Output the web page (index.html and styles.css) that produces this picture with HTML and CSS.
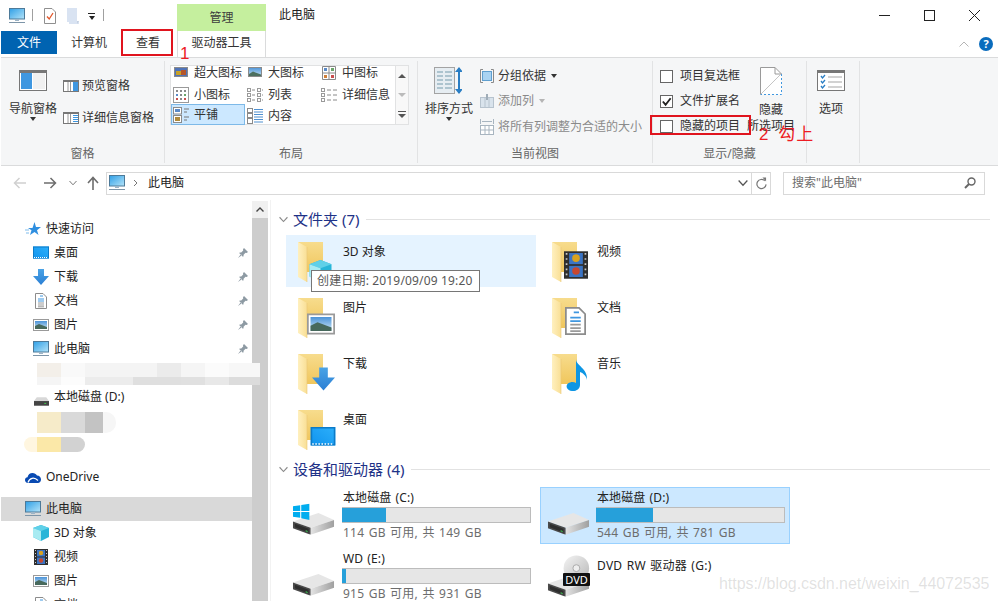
FILE: index.html
```html
<!DOCTYPE html>
<html lang="zh-CN">
<head>
<meta charset="utf-8">
<title>此电脑</title>
<link rel="stylesheet" href="styles.css">
</head>
<body>
<svg class="defs" width="0" height="0" aria-hidden="true">
  <defs>
    <linearGradient id="gScreen" x1="0" y1="0" x2="1" y2="1"><stop offset="0" stop-color="#2f9fe6"/><stop offset="1" stop-color="#b5e4f9"/></linearGradient>
    <linearGradient id="gFolderBack" x1="0" y1="0" x2="0" y2="1"><stop offset="0" stop-color="#f7dc8d"/><stop offset="1" stop-color="#f0c65c"/></linearGradient>
    <linearGradient id="gFolderFront" x1="0" y1="0" x2="1" y2="0"><stop offset="0" stop-color="#fff0bf"/><stop offset="1" stop-color="#f9df95"/></linearGradient>
    <linearGradient id="gArrow" x1="0" y1="0" x2="0" y2="1"><stop offset="0" stop-color="#4aa3e6"/><stop offset="1" stop-color="#2b7fd4"/></linearGradient>
    <linearGradient id="gDesk" x1="0" y1="1" x2="1" y2="0"><stop offset="0" stop-color="#0f93ee"/><stop offset="1" stop-color="#2db0fb"/></linearGradient>
    <linearGradient id="gSky" x1="0" y1="0" x2="0" y2="1"><stop offset="0" stop-color="#4b93d8"/><stop offset="1" stop-color="#cfe7f5"/></linearGradient>
    <linearGradient id="gHdd" x1="0" y1="0" x2="1" y2="0"><stop offset="0" stop-color="#e4e4e4"/><stop offset="1" stop-color="#9f9f9f"/></linearGradient>
    <linearGradient id="gDisc" x1="0" y1="0" x2="1" y2="1"><stop offset="0" stop-color="#f4f4f4"/><stop offset="1" stop-color="#b8b8b8"/></linearGradient>

    <symbol id="i-monitor" viewBox="0 0 16 16"><rect x=".5" y=".5" width="15" height="10.5" fill="url(#gScreen)" stroke="#4d7a99"/><rect x="6" y="11" width="4" height="2" fill="#9db4c6"/><rect x="0" y="14" width="16" height="1" fill="#7d95a8"/></symbol>
    <symbol id="i-pagecheck" viewBox="0 0 12 16"><path d="M.5.5H8L11.500 4V15.500H.5Z" fill="#fff" stroke="#8f8f8f"/><path d="M3 8.500 5.200 11 9 5" fill="none" stroke="#e2562a" stroke-width="1.300"/></symbol>
    <symbol id="i-pageblank" viewBox="0 0 12 16"><path d="M0 0H10V13L12 13V16H2V14H0Z" fill="#d9e3f2"/><path d="M10 13H12L10 16Z" fill="#c4cfdf"/></symbol>
    <symbol id="i-navpane" viewBox="0 0 28 21"><rect x=".5" y=".5" width="27" height="20" fill="#fff" stroke="#777"/><rect x="0" y="0" width="28" height="3" fill="#777"/><rect x="2" y="3" width="11" height="16" fill="#3f97e0"/><rect x="14" y="3" width="12" height="16" fill="#f1f1f1"/></symbol>
    <symbol id="i-preview" viewBox="0 0 16 12"><rect x=".5" y=".5" width="15" height="11" fill="#fff" stroke="#777"/><rect x="0" y="0" width="16" height="2" fill="#777"/><path d="M5 2V11M7.500 2V11" stroke="#9a9a9a"/><rect x="10" y="2" width="5" height="9" fill="#3f97e0"/></symbol>
    <symbol id="i-detailspane" viewBox="0 0 16 12"><rect x=".5" y=".5" width="15" height="11" fill="#fff" stroke="#777"/><rect x="0" y="0" width="16" height="2" fill="#777"/><path d="M5 2V11M7.500 2V11" stroke="#9a9a9a"/><path d="M10 3.500H15M10 5.500H15M10 7.500H15M10 9.500H15" stroke="#3f97e0"/></symbol>

    <symbol id="g-xl" viewBox="0 0 16 16"><rect x="1.500" y="2.500" width="13" height="9" fill="#4f73b8" stroke="#8a8a8a"/><rect x="3" y="6" width="5" height="4" fill="#c9a227"/><rect x="8" y="5" width="5" height="5" fill="#b5562a"/></symbol>
    <symbol id="g-lg" viewBox="0 0 16 16"><rect x="1.500" y="2.500" width="13" height="9" fill="url(#gSky)" stroke="#8a8a8a"/><path d="M2 9 6 6.500 14 9.500V11H2Z" fill="#4d7060"/></symbol>
    <symbol id="g-md" viewBox="0 0 16 16"><path d="M1.500 1.500H14.500V14.500H1.500ZM1.500 8H14.500M8 1.500V14.500" fill="#fff" stroke="#8a8a8a"/><rect x="3" y="3" width="3" height="3" fill="#5a8ac8"/><rect x="10" y="3" width="3" height="3" fill="#6aa56a"/><rect x="3" y="10" width="3" height="3" fill="#d0803a"/><rect x="10" y="10" width="3" height="3" fill="#c94f4f"/></symbol>
    <symbol id="g-sm" viewBox="0 0 16 16"><rect x=".5" y=".5" width="15" height="15" fill="#fff" stroke="#9a9a9a"/><g fill="#8a8a8a"><rect x="3" y="3" width="2" height="2"/><rect x="7" y="3" width="2" height="2"/><rect x="11" y="3" width="2" height="2"/><rect x="3" y="7" width="2" height="2" fill="#5a8ac8"/><rect x="7" y="7" width="2" height="2"/><rect x="11" y="7" width="2" height="2" fill="#6aa56a"/><rect x="3" y="11" width="2" height="2" fill="#c94f4f"/><rect x="7" y="11" width="2" height="2"/><rect x="11" y="11" width="2" height="2" fill="#c94f4f"/></g></symbol>
    <symbol id="g-list" viewBox="0 0 16 16"><g fill="#fff" stroke="#9a9a9a"><rect x=".5" y="1.500" width="3" height="3"/><rect x=".5" y="6.500" width="3" height="3"/><rect x=".5" y="11.500" width="3" height="3"/><rect x="10.500" y="1.500" width="3" height="3"/><rect x="10.500" y="6.500" width="3" height="3"/><rect x="10.500" y="11.500" width="3" height="3"/></g><path d="M5 3H8M5 8H8M5 13H8M15 3H16M15 8H16M15 13H16" stroke="#8a8a8a"/></symbol>
    <symbol id="g-detail" viewBox="0 0 16 16"><g fill="#fff" stroke="#9a9a9a"><rect x=".5" y="1.500" width="3" height="3"/><rect x=".5" y="6.500" width="3" height="3"/><rect x=".5" y="11.500" width="3" height="3"/></g><path d="M6 3H10M12 3H16M6 8H10M12 8H16M6 13H10M12 13H16" stroke="#8a8a8a"/></symbol>
    <symbol id="g-tile" viewBox="0 0 16 16"><rect x=".5" y=".5" width="8" height="6.500" fill="#fff" stroke="#8a8a8a"/><rect x="2" y="2" width="5" height="3" fill="#5a8ac8"/><rect x=".5" y="8.500" width="8" height="7" fill="#fff" stroke="#8a8a8a"/><rect x="2" y="10" width="5" height="4" fill="#b08a3a"/><path d="M11 2H16M11 5H14M11 10H16M11 13H14" stroke="#777"/></symbol>
    <symbol id="g-content" viewBox="0 0 16 16"><g fill="#fff" stroke="#8a8a8a"><rect x=".5" y=".5" width="5" height="4"/><rect x=".5" y="5.500" width="5" height="4"/><rect x=".5" y="10.500" width="5" height="5"/></g><path d="M7 1.500H16M7 4H16M7 6.500H16M7 9H16M7 11.500H16M7 14H16" stroke="#4f90d0"/></symbol>

    <symbol id="i-sort" viewBox="0 0 28 27"><rect x=".5" y=".5" width="20" height="26" fill="#e6edf2" stroke="#a3a3a3"/><path d="M3 5H9M11 5H18M3 9H9M11 9H18M3 13H9M11 13H18M3 17H9M11 17H18M3 21H9M11 21H18" stroke="#9ab7c4" stroke-width="1.600"/><path d="M25 1V26" stroke="#2a7ec4" stroke-width="2"/><path d="M21 5 25 0 29 5ZM21 22 25 27 29 22Z" fill="#2a7ec4"/></symbol>
    <symbol id="i-group" viewBox="0 0 14 14"><path d="M3 .5H.5V13.500H3M11 .5H13.500V13.500H11" fill="none" stroke="#8a8a8a"/><rect x="2.500" y="2.500" width="9" height="9" fill="#a9d3f2" stroke="#5f9fcf"/></symbol>
    <symbol id="i-addcol" viewBox="0 0 14 14"><rect x=".5" y="3.500" width="13" height="10" fill="#d9e3ec" stroke="#b7c3ce"/><path d="M5 3V14M9 3V14" stroke="#b7c3ce"/><path d="M7 0V6" stroke="#a0adb8" stroke-width="2"/></symbol>
    <symbol id="i-fit" viewBox="0 0 14 16"><path d="M.5 0V5M13.500 0V5M2 2.500H12" stroke="#a8b5c0" fill="none"/><rect x=".5" y="6.500" width="13" height="9" fill="#fff" stroke="#a8b5c0"/><path d="M5 7V15M9 7V15M1 11H13" stroke="#a8b5c0"/></symbol>
    <symbol id="i-hide" viewBox="0 0 22 28"><path d="M.5 27.500V.5H15L21.500 7V27.500Z" fill="#fff"/><path d="M21.500 7V27.500H.5" fill="none" stroke="#3f97e0" stroke-dasharray="2 2"/><path d="M.5 27.500V.5H15L21.500 7" fill="none" stroke="#9a9a9a"/><path d="M15 .5V7H21.500" fill="none" stroke="#9a9a9a"/><path d="M1 27 21 7" stroke="#c4c4c4"/></symbol>
    <symbol id="i-options" viewBox="0 0 28 21"><rect x=".5" y=".5" width="27" height="20" fill="#fff" stroke="#777"/><rect x="0" y="0" width="28" height="3" fill="#777"/><path d="M4 6 5.500 8 8 5M4 11 5.500 13 8 10M4 16 5.500 18 8 15" fill="none" stroke="#2a7ec4" stroke-width="1.300"/><path d="M11 7H25M11 12H25M11 17H25" stroke="#a5a5a5"/></symbol>

    <symbol id="i-star" viewBox="0 0 16 16"><path d="M9.500 1 11 6 16 6 12 9.200 13.500 14 9.500 11 5 14 6.500 9.200 3 7H7.500Z" fill="#2f8fe0"/><path d="M0 9H4M1 12H4" stroke="#7ebcec"/></symbol>
    <symbol id="i-desktop" viewBox="0 0 16 13"><rect width="16" height="12" fill="url(#gDesk)"/><rect x=".5" y=".5" width="15" height="11" fill="none" stroke="#0c7bc8"/><path d="M1 11H15" stroke="#fff" stroke-dasharray="1 1"/></symbol>
    <symbol id="i-down" viewBox="0 0 16 16"><path d="M5 0H11V7H16L8 16 0 7H5Z" fill="url(#gArrow)"/></symbol>
    <symbol id="i-doc" viewBox="0 0 12 16"><path d="M.5.5H8L11.500 4V15.500H.5Z" fill="#fff" stroke="#8c8c8c"/><path d="M5 3H8M3 6H9M3 8H9" stroke="#3f97e0"/><path d="M3 10H9M3 12H9M3 13.800H9" stroke="#9a9a9a"/></symbol>
    <symbol id="i-pic" viewBox="0 0 16 12"><rect x=".5" y=".5" width="15" height="11" fill="#fff" stroke="#9a9a9a"/><rect x="2" y="2" width="12" height="8" fill="url(#gSky)"/><path d="M2 7 6 5 14 8V10H2Z" fill="#47695c"/></symbol>
    <symbol id="i-pin" viewBox="0 0 10 10"><path d="M6 0 10 4 8.600 5 7.500 4.800 5.600 6.800 5.500 8.500 4.500 8.500 1.500 5.500V4.500L3.200 4.400 5.200 2.500 5 1.300ZM2.800 6.200 0 10 3.800 7.200Z" fill="#8d9aa3"/></symbol>
    <symbol id="i-disk" viewBox="0 0 16 9"><path d="M3 0H13L16 4H0Z" fill="#d8d8d8"/><rect y="4" width="16" height="5" fill="#444"/><rect x="11" y="6" width="2" height="1" fill="#3fd04f"/></symbol>
    <symbol id="i-cloud" viewBox="0 0 16 11"><path d="M3 11C1 11 0 9.500 0 8 0 6.500 1 5.500 2.500 5.300 3 2.500 5 1 7.500 1 9.500 1 11 2 12 3.500 14.500 3.500 16 5.500 16 7.500 16 9.500 14.500 11 13 11Z" fill="#094ab2"/><path d="M3 10.500C4.500 6 9 4.500 13 8.500" fill="none" stroke="#fff" stroke-width="1.200"/></symbol>
    <symbol id="i-cube" viewBox="0 0 16 16"><path d="M8 0 16 3V12L8 16 0 12V3Z" fill="#28b5d8"/><path d="M8 0 16 3 8 6 0 3Z" fill="#5fd0e8"/><path d="M0 3 8 6V16L0 12Z" fill="#a8ebf2"/></symbol>
    <symbol id="i-film" viewBox="0 0 14 16"><rect width="14" height="16" fill="#2f2f2f"/><rect x="3" y="1" width="8" height="6.500" fill="#3b74c4"/><rect x="3" y="8.500" width="8" height="6.500" fill="#3b74c4"/><circle cx="7" cy="4" r="2.200" fill="#d8a21f"/><circle cx="7" cy="11.500" r="2.200" fill="#c9472f"/><path d="M1.500 1V15M12.500 1V15" stroke="#c9c9c9" stroke-dasharray="1 2"/></symbol>

    <symbol id="i-folder" viewBox="0 0 42 42"><path d="M0 0H25V30H9Z" fill="url(#gFolderBack)"/><path d="M0 0 9 5V40L0 35Z" fill="url(#gFolderFront)"/><path d="M9 5V40" stroke="#e9c877" stroke-width=".6"/></symbol>
    <symbol id="i-hdd" viewBox="0 0 42 22"><path d="M0 8.500 26 0 42 7 18 15Z" fill="#e6e6e6"/><path d="M18 15 42 7V14L18 22Z" fill="url(#gHdd)"/><path d="M0 8.500 18 15V22L0 15.500Z" fill="#4a4a4a"/><path d="M2 11 16 16V20L2 14.500Z" fill="#2e2e2e"/><path d="M13 17.500 15 18.300V19.300L13 18.500Z" fill="#41e05a"/></symbol>
    <symbol id="i-win" viewBox="0 0 16 16"><path d="M0 3 7 2V7.500H0ZM8 1.800 16 .5V7.500H8ZM0 8.500H7V14L0 13ZM8 8.500H16V16L8 14.500Z" fill="#00adef"/></symbol>
    <symbol id="i-magnify" viewBox="0 0 12 12"><circle cx="7.500" cy="4.500" r="3.500" fill="none" stroke="#666" stroke-width="1.400"/><path d="M5 7 1 11" stroke="#666" stroke-width="2"/></symbol>
    <symbol id="i-chev-down" viewBox="0 0 8 8"><path d="M.5 2 4 5.800 7.500 2" fill="none" stroke="currentColor" stroke-width="1"/></symbol>
    <symbol id="i-arrow" viewBox="0 0 14 12"><path d="M13 6H1.500M6.500 1 1.500 6 6.500 11" fill="none" stroke="currentColor" stroke-width="1.500"/></symbol>
  </defs>
</svg>

<div class="app">
  <header class="titlebar">
    <div class="qat">
      <svg class="qat-monitor"><use href="#i-monitor"/></svg>
      <span class="qat-sep"></span>
      <svg class="qat-page"><use href="#i-pagecheck"/></svg>
      <svg class="qat-page"><use href="#i-pageblank"/></svg>
      <span class="qat-drop"></span>
      <span class="qat-sep"></span>
    </div>
    <div class="tool-head">管理</div>
    <div class="win-title">此电脑</div>
    <div class="win-controls">
      <span class="win-btn"><svg width="11" height="11" viewBox="0 0 11 11"><path d="M0 5.500H11" stroke="#222"/></svg></span>
      <span class="win-btn"><svg width="11" height="11" viewBox="0 0 11 11"><rect x=".5" y=".5" width="10" height="10" fill="none" stroke="#222"/></svg></span>
      <span class="win-btn"><svg width="11" height="11" viewBox="0 0 11 11"><path d="M0 0 11 11M11 0 0 11" stroke="#222"/></svg></span>
    </div>
  </header>

  <nav class="tabs">
    <span class="tab-file">文件</span>
    <span class="tab tab-computer">计算机</span>
    <span class="tab tab-view">查看</span>
    <span class="tab-tool">驱动器工具</span>
    <svg class="ribbon-collapse" viewBox="0 0 10 6"><path d="M.5 5.500 5 1 9.500 5.500" fill="none" stroke="#b5b5b5"/></svg>
    <span class="help">?</span>
  </nav>

  <section class="ribbon">
    <div class="group group-pane">
      <div class="group-body">
        <div class="large large-nav"><svg class="ico-28"><use href="#i-navpane"/></svg><span>导航窗格</span><i class="caret"></i></div>
        <div class="pane-col">
          <div class="small"><svg class="ico-16-12"><use href="#i-preview"/></svg><span>预览窗格</span></div>
          <div class="small"><svg class="ico-16-12"><use href="#i-detailspane"/></svg><span>详细信息窗格</span></div>
        </div>
      </div>
      <div class="group-label">窗格</div>
    </div>

    <div class="group group-layout">
      <div class="group-body">
        <div class="gallery">
          <div class="gal-grid">
            <div class="gal-item gal-cut"><svg><use href="#g-xl"/></svg><span>超大图标</span></div>
            <div class="gal-item gal-cut"><svg><use href="#g-lg"/></svg><span>大图标</span></div>
            <div class="gal-item gal-cut"><svg><use href="#g-md"/></svg><span>中图标</span></div>
            <div class="gal-item"><svg><use href="#g-sm"/></svg><span>小图标</span></div>
            <div class="gal-item"><svg><use href="#g-list"/></svg><span>列表</span></div>
            <div class="gal-item"><svg><use href="#g-detail"/></svg><span>详细信息</span></div>
            <div class="gal-item gal-selected"><svg><use href="#g-tile"/></svg><span>平铺</span></div>
            <div class="gal-item"><svg><use href="#g-content"/></svg><span>内容</span></div>
          </div>
          <div class="gal-scroll">
            <i class="up"></i><i class="dis"></i><i class="more"></i>
          </div>
        </div>
      </div>
      <div class="group-label">布局</div>
    </div>

    <div class="group group-view">
      <div class="group-body">
        <div class="large large-sort"><svg class="ico-sort"><use href="#i-sort"/></svg><span>排序方式</span><i class="caret"></i></div>
        <div class="view-col">
          <div class="small"><svg class="ico-14"><use href="#i-group"/></svg><span>分组依据</span><i class="caret caret-inline"></i></div>
          <div class="small disabled"><svg class="ico-14"><use href="#i-addcol"/></svg><span>添加列</span><i class="caret caret-inline caret-dis"></i></div>
          <div class="small disabled"><svg class="ico-14 ico-fit"><use href="#i-fit"/></svg><span>将所有列调整为合适的大小</span></div>
        </div>
      </div>
      <div class="group-label">当前视图</div>
    </div>

    <div class="group group-show">
      <div class="group-body">
        <div class="check-col">
          <label class="check"><i class="box"></i><span>项目复选框</span></label>
          <label class="check"><i class="box"><svg viewBox="0 0 12 12"><path d="M2 6 5 9.500 10.500 2.500" fill="none" stroke="#222" stroke-width="2"/></svg></i><span>文件扩展名</span></label>
          <label class="check"><i class="box"></i><span>隐藏的项目</span></label>
        </div>
        <div class="hide-btn">
          <svg class="ico-hide"><use href="#i-hide"/></svg>
          <span>隐藏</span>
          <span class="hide-second">所选项目</span>
        </div>
      </div>
      <div class="group-label">显示/隐藏</div>
    </div>

    <div class="group group-options">
      <div class="group-body">
        <div class="large large-opt"><svg class="ico-28"><use href="#i-options"/></svg><span>选项</span></div>
      </div>
    </div>
  </section>

  <div class="addressrow">
    <svg class="nav-back"><use href="#i-arrow"/></svg>
    <svg class="nav-fwd"><use href="#i-arrow"/></svg>
    <svg class="nav-hist"><use href="#i-chev-down"/></svg>
    <svg class="nav-up" viewBox="0 0 12 14"><path d="M6 14V2M1 7 6 1.500 11 7" fill="none" stroke="#6d6d6d" stroke-width="1.600"/></svg>
    <div class="addressbar">
      <svg class="addr-ico"><use href="#i-monitor"/></svg>
      <svg class="addr-sep" viewBox="0 0 5 8"><path d="M1 1 4 4 1 7" fill="none" stroke="#777"/></svg>
      <span class="addr-text">此电脑</span>
      <svg class="addr-drop"><use href="#i-chev-down"/></svg>
      <span class="addr-refresh"><svg viewBox="0 0 12 14"><path d="M9.500 4A5 5 0 1 0 11 8" fill="none" stroke="#777" stroke-width="1.300"/><path d="M7 .5H11V4.800Z" fill="#777"/></svg></span>
    </div>
    <div class="searchbar"><span>搜索"此电脑"</span><svg><use href="#i-magnify"/></svg></div>
  </div>

  <main class="body">
    <aside class="nav">
      <div class="nav-row l0"><svg class="n-star"><use href="#i-star"/></svg><span>快速访问</span></div>
      <div class="nav-row l1"><svg><use href="#i-desktop"/></svg><span>桌面</span><svg class="pin"><use href="#i-pin"/></svg></div>
      <div class="nav-row l1"><svg><use href="#i-down"/></svg><span>下载</span><svg class="pin"><use href="#i-pin"/></svg></div>
      <div class="nav-row l1"><svg><use href="#i-doc"/></svg><span>文档</span><svg class="pin"><use href="#i-pin"/></svg></div>
      <div class="nav-row l1"><svg><use href="#i-pic"/></svg><span>图片</span><svg class="pin"><use href="#i-pin"/></svg></div>
      <div class="nav-row l1"><svg><use href="#i-monitor"/></svg><span>此电脑</span><svg class="pin"><use href="#i-pin"/></svg></div>
      <div class="nav-row mosaic-row">
        <svg class="mosaic m1" viewBox="0 0 223 22" shape-rendering="crispEdges">
          <rect x="0" y="0" width="24" height="14" fill="#f3efe9"/><rect x="24" y="0" width="24" height="14" fill="#f9f9f9"/><rect x="48" y="0" width="96" height="14" fill="#f4f4f4"/><rect x="120" y="0" width="24" height="14" fill="#ebebeb"/><rect x="144" y="0" width="24" height="14" fill="#f5f5f5"/><rect x="168" y="0" width="24" height="14" fill="#fbfbfb"/><rect x="192" y="0" width="31" height="14" fill="#f7f7f7"/>
          <rect x="0" y="14" width="24" height="8" fill="#f5f5f5"/><rect x="24" y="14" width="24" height="8" fill="#fcfcfc"/><rect x="48" y="14" width="48" height="8" fill="#ececec"/><rect x="96" y="14" width="48" height="8" fill="#dfdfdf"/><rect x="144" y="14" width="24" height="8" fill="#e0e0e0"/><rect x="168" y="14" width="24" height="8" fill="#e8e8e8"/><rect x="192" y="14" width="31" height="8" fill="#dcdcdc"/>
        </svg>
      </div>
      <div class="nav-row l1 disk-row"><svg class="n-disk"><use href="#i-disk"/></svg><span>本地磁盘 (D:)</span></div>
      <div class="nav-row mosaic-row">
        <svg class="mosaic m2" viewBox="0 0 79 21"><rect x="58" width="21" height="21" rx="10" fill="#f6f6f6"/><rect width="24" height="21" fill="#f6ebc9"/><rect x="24" width="24" height="21" fill="#d9d9d9"/><rect x="48" width="18" height="21" fill="#c3c3c3"/></svg>
      </div>
      <div class="nav-row mosaic-row">
        <svg class="mosaic m3" viewBox="0 0 61 15"><rect width="20" height="15" rx="7.500" fill="#fff6e0"/><rect x="13" width="24" height="15" fill="#fbe8a8"/><rect x="37" width="24" height="15" rx="7.500" fill="#d2d2d2"/><rect x="37" width="12" height="15" fill="#d2d2d2"/></svg>
      </div>
      <div class="nav-row l0 nav-gap"><svg class="n-cloud"><use href="#i-cloud"/></svg><span>OneDrive</span></div>
      <div class="nav-row l0 nav-gap nav-selected"><svg><use href="#i-monitor"/></svg><span>此电脑</span></div>
      <div class="nav-row l1"><svg><use href="#i-cube"/></svg><span>3D 对象</span></div>
      <div class="nav-row l1"><svg><use href="#i-film"/></svg><span>视频</span></div>
      <div class="nav-row l1"><svg><use href="#i-pic"/></svg><span>图片</span></div>
      <div class="nav-row l1"><svg><use href="#i-doc"/></svg><span>文档</span></div>
    </aside>

    <div class="vscroll"><span class="vscroll-up"><svg viewBox="0 0 8 5"><path d="M.5 4.500 4 1 7.500 4.500" fill="none" stroke="#444" stroke-width="1.400"/></svg></span></div>

    <div class="content">
      <div class="sec-head"><svg><use href="#i-chev-down"/></svg><h2>文件夹 (7)</h2><span class="sec-line"></span></div>
      <div class="folders">
        <div class="tile tile-hover">
          <svg class="folder-ico" viewBox="0 0 42 42"><use href="#i-folder" width="42" height="42"/><use href="#i-cube" x="10" y="18" width="25" height="22"/></svg><span>3D 对象</span>
        </div>
        <div class="tile">
          <svg class="folder-ico" viewBox="0 0 42 42"><use href="#i-folder" width="42" height="42"/><use href="#i-film" x="12" y="8" width="24" height="30" preserveAspectRatio="none"/></svg><span>视频</span>
        </div>
        <div class="tile">
          <svg class="folder-ico" viewBox="0 0 42 42"><use href="#i-folder" width="42" height="42"/><use href="#i-pic" x="9" y="15" width="28" height="22" preserveAspectRatio="none"/></svg><span>图片</span>
        </div>
        <div class="tile">
          <svg class="folder-ico" viewBox="0 0 42 42"><use href="#i-folder" width="42" height="42"/><use href="#i-doc" x="13" y="9" width="21" height="28" preserveAspectRatio="none"/></svg><span>文档</span>
        </div>
        <div class="tile">
          <svg class="folder-ico" viewBox="0 0 42 42"><use href="#i-folder" width="42" height="42"/><use href="#i-down" x="14" y="13" width="23" height="24" preserveAspectRatio="none"/></svg><span>下载</span>
        </div>
        <div class="tile">
          <svg class="folder-ico" viewBox="0 0 42 42"><use href="#i-folder" width="42" height="42"/><path d="M24 5C24 12 36 14 35 26 34.500 22 31 19 28 18V31C28 35 24 37.500 20 37 15 36.500 13 32 16 29.500 18.500 27.500 22 27.500 24 29Z" fill="#0d96e4"/></svg><span>音乐</span>
        </div>
        <div class="tile">
          <svg class="folder-ico" viewBox="0 0 42 42"><use href="#i-folder" width="42" height="42"/><use href="#i-desktop" x="11" y="17" width="28" height="20" preserveAspectRatio="none"/></svg><span>桌面</span>
        </div>
      </div>

      <div class="sec-head"><svg><use href="#i-chev-down"/></svg><h2>设备和驱动器 (4)</h2><span class="sec-line"></span></div>
      <div class="drives">
        <div class="drive">
          <svg class="drive-ico" viewBox="0 0 56 55"><use href="#i-hdd" x="6" y="25" width="42" height="22"/><use href="#i-win" x="6" y="15" width="17" height="17"/></svg>
          <div class="drive-info"><div class="drive-name">本地磁盘 (C:)</div><div class="bar"><i style="width:44px"></i></div><div class="drive-free">114 GB 可用, 共 149 GB</div></div>
        </div>
        <div class="drive drive-selected">
          <svg class="drive-ico" viewBox="0 0 56 55"><use href="#i-hdd" x="7" y="25" width="42" height="22"/></svg>
          <div class="drive-info"><div class="drive-name">本地磁盘 (D:)</div><div class="bar"><i style="width:57px"></i></div><div class="drive-free">544 GB 可用, 共 781 GB</div></div>
        </div>
        <div class="drive">
          <svg class="drive-ico" viewBox="0 0 56 55"><use href="#i-hdd" x="6" y="25" width="42" height="22"/></svg>
          <div class="drive-info"><div class="drive-name">WD (E:)</div><div class="bar"><i style="width:4px"></i></div><div class="drive-free">915 GB 可用, 共 931 GB</div></div>
        </div>
        <div class="drive">
          <svg class="drive-ico" viewBox="0 0 56 55"><use href="#i-hdd" x="7" y="26" width="42" height="22"/><circle cx="36" cy="19" r="13" fill="url(#gDisc)"/><circle cx="36" cy="19" r="3.500" fill="#eee" stroke="#aaa"/></svg>
          <span class="dvd-badge">DVD</span>
          <div class="drive-info"><div class="drive-name drive-name-dvd">DVD RW 驱动器 (G:)</div></div>
        </div>
      </div>
    </div>
  </main>

  <div class="mark mark-view"></div>
  <div class="mark mark-hidden"></div>
  <div class="note note-1">1</div>
  <div class="note note-2">2 勾上</div>
  <div class="tooltip">创建日期: 2019/09/09 19:20</div>
  <div class="watermark">https://blog.csdn.net/weixin_44072535</div>
</div>
</body>
</html>
```

FILE: styles.css
```css
* { box-sizing: border-box; }
html, body { margin: 0; padding: 0; background: #fff; }
body {
  width: 998px;
  height: 601px;
  overflow: hidden;
  font-family: "Noto Sans", "Noto Sans CJK SC", sans-serif;
  font-size: 12px;
  line-height: 16px;
  color: #1f1f1f;
}
.defs { position: absolute; }
svg { display: block; flex: none; overflow: visible; }
i { display: block; font-style: normal; }
.app { position: relative; width: 998px; height: 601px; overflow: hidden; }

/* title bar */
.titlebar { display: flex; height: 31px; }
.qat { display: flex; align-items: flex-start; width: 177px; padding: 8px 0 0 9px; }
.qat-monitor { width: 16px; height: 16px; }
.qat-sep { width: 1px; height: 12px; margin: 1px 0 0 7px; background: #a0a0a0; }
.qat-page { width: 12px; height: 16px; margin-left: 11px; }
.qat-sep + .qat-page { margin-left: 11px; }
.qat-drop { width: 7px; height: 7px; margin: 5px 0 0 9px; border-top: 1px solid #222; position: relative; }
.qat-drop::after { content: ""; display: block; margin: 2px auto 0; width: 0; border: 3.500px solid transparent; border-top: 4px solid #222; border-bottom: 0; }
.qat-drop + .qat-sep { margin-left: 8px; }
.tool-head { width: 89px; height: 27px; margin-top: 4px; background: #c5ef9e; text-align: center; line-height: 27px; color: #3d3d3d; }
.win-title { margin: 7px 0 0 13px; color: #222; }
.win-controls { display: flex; margin-left: auto; padding-right: 1px; }
.win-btn { display: flex; align-items: center; justify-content: center; width: 45px; height: 31px; }

/* tabs */
.tabs { display: flex; align-items: flex-start; height: 26px; }
.tab-file { width: 56px; height: 23px; margin-left: 1px; background: #0063b1; color: #fff; text-align: center; line-height: 24px; }
.tab { line-height: 24px; color: #333; }
.tab-computer { margin-left: 14px; }
.tab-view { margin-left: 29px; }
.tab-tool { width: 89px; height: 26px; margin-left: 17px; border: 1px solid #dadbdc; border-width: 0 1px; text-align: center; line-height: 24px; color: #333; }
.ribbon-collapse { width: 10px; height: 6px; margin: 10px 0 0 auto; }
.help { width: 14px; height: 14px; margin: 6px 5px 0 10px; border-radius: 50%; background: #0a6cbd; color: #fff; font-weight: 700; text-align: center; font-size: 11px; line-height: 14px; }

/* ribbon */
.ribbon { display: flex; height: 109px; margin-left: 1px; background: #f5f6f7; border-top: 1px solid #dadbdc; border-bottom: 1px solid #dadbdc; padding-top: 3px; }
.group { display: flex; flex-direction: column; height: 102px; border-right: 1px solid #e2e3e4; }
.group-body { display: flex; flex: 1; min-height: 0; }
.group-label { height: 18px; text-align: center; color: #666; line-height: 17px; }
.group-pane { width: 164px; }
.group-layout { width: 253px; }
.group-view { width: 235px; }
.group-show { width: 154px; }
.group-options { width: 53px; }

.large { display: flex; flex-direction: column; align-items: center; }
.large span { margin-top: 10px; color: #333; white-space: nowrap; }
.caret { width: 0; border: 3px solid transparent; border-top: 4px solid #333; border-bottom: 0; margin-top: 0; }
.ico-28 { width: 28px; height: 21px; margin-top: 9px; }
.large-nav { width: 48px; margin-left: 8px; }
.pane-col { display: flex; flex-direction: column; gap: 12px; margin: 15px 0 0 6px; }
.small { display: flex; align-items: center; height: 20px; white-space: nowrap; color: #333; }
.ico-16-12 { width: 16px; height: 12px; margin-right: 3px; }

.gallery { display: flex; width: 239px; height: 60px; margin: 4px 0 0 5px; background: #fff; border: 1px solid #e1e2e3; }
.gal-grid { display: grid; grid-template-columns: 74px 74px 74px; grid-template-rows: 18px 20px 21px; width: 223px; }
.gal-item { display: flex; align-items: center; gap: 5px; padding: 2px 0 0 2px; color: #333; white-space: nowrap; }
.gal-item svg { width: 16px; height: 16px; }
.gal-cut { padding: 0 0 4px 2px; }
.gal-selected { background: #cce8ff; border: 1px solid #7db9e8; padding: 1px 0 0 1px; }
.gal-scroll { flex: 1; display: flex; flex-direction: column; align-items: center; justify-content: space-between; padding: 8px 0 7px; border-left: 1px solid #e1e2e3; background: #f8f8f8; margin-left: 1px; }
.gal-scroll .up { width: 0; border: 4px solid transparent; border-bottom: 4px solid #555; border-top: 0; }
.gal-scroll .dis { width: 0; border: 4px solid transparent; border-top: 4px solid #bbb; border-bottom: 0; }
.gal-scroll .more { width: 8px; border-top: 1px solid #555; position: relative; height: 6px; }
.gal-scroll .more::after { content: ""; display: block; margin-top: 2px; width: 0; border: 4px solid transparent; border-top: 4px solid #555; border-bottom: 0; }

.large-sort { width: 48px; margin-left: 7px; }
.ico-sort { width: 28px; height: 27px; margin: 6px 0 0 -2px; }
.large-sort span { margin-top: 7px; }
.view-col { display: flex; flex-direction: column; margin: 5px 0 0 7px; gap: 5px; }
.view-col .small:last-child { margin-top: 1px; }
.ico-14 { width: 14px; height: 14px; margin-right: 4px; }
.ico-fit { height: 16px; }
.disabled { color: #8a8a8a; }
.caret-inline { margin-left: 5px; }
.caret-dis { border-top-color: #b5b5b5; }

.check-col { display: flex; flex-direction: column; gap: 5px; margin: 5px 0 0 7px; }
.check { display: flex; align-items: center; height: 20px; white-space: nowrap; color: #333; }
.box { width: 13px; height: 13px; margin-right: 7px; background: #fff; border: 1px solid #666; }
.box svg { width: 11px; height: 11px; }
.hide-btn { display: flex; flex-direction: column; align-items: center; width: 48px; margin-left: 7px; white-space: nowrap; color: #333; }
.ico-hide { width: 22px; height: 28px; margin-top: 6px; }
.hide-btn span { margin-top: 7px; }
.hide-btn .hide-second { margin-top: 0; }
.large-opt { width: 48px; }

/* address row */
.addressrow { display: flex; align-items: center; height: 34px; }
.nav-back { width: 14px; height: 12px; margin-left: 13px; color: #d0d0d0; }
.nav-fwd { width: 14px; height: 12px; margin-left: 16px; color: #6d6d6d; transform: scaleX(-1); }
.nav-hist { width: 8px; height: 8px; margin-left: 12px; color: #777; }
.nav-up { width: 12px; height: 14px; margin-left: 10px; }
.addressbar { display: flex; align-items: center; width: 665px; height: 23px; margin-left: 7px; border: 1px solid #d9d9d9; }
.addr-ico { width: 16px; height: 16px; margin-left: 2px; }
.addr-sep { width: 5px; height: 8px; margin-left: 8px; }
.addr-text { margin-left: 10px; color: #222; }
.addr-drop { width: 10px; height: 10px; margin-left: auto; color: #555; }
.addr-refresh { display: flex; align-items: center; justify-content: center; width: 19px; height: 21px; margin-left: 3px; border-left: 1px solid #d9d9d9; }
.addr-refresh svg { width: 11px; height: 13px; }
.searchbar { display: flex; align-items: center; justify-content: space-between; width: 202px; height: 23px; margin-left: 12px; padding: 0 8px 0 8px; border: 1px solid #d9d9d9; color: #6d6d6d; }
.searchbar svg { width: 12px; height: 12px; }

/* main */
.body { display: flex; height: 401px; overflow: hidden; }
.nav { width: 251px; margin-left: 1px; padding-top: 17px; flex: none; position: relative; z-index: 1; }
.nav-row { display: flex; align-items: center; height: 24px; gap: 5px; white-space: nowrap; color: #222; }
.nav-row svg { width: 16px; height: 16px; }
.l0 { padding-left: 24px; }
.l1 { padding-left: 32px; padding-right: 4px; }
.nav-row .n-star { width: 16px; }
.nav-row .pin { width: 10px; height: 10px; margin-left: auto; }
.nav-gap { margin-top: 8px; }
.nav-selected { background: #d9d9d9; }
.disk-row { padding-left: 33px; }
.nav-row .n-disk { width: 15px; height: 9px; margin-top: 8px; }
.nav-row .n-cloud { width: 16px; height: 11px; }
.mosaic-row { align-items: flex-start; }
.nav-row .m1 { width: 223px; height: 22px; margin: 2px 0 0 36px; }
.nav-row .m2 { width: 79px; height: 21px; margin: 3px 0 0 36px; }
.nav-row .m3 { width: 61px; height: 15px; margin: 4px 0 0 23px; }

.vscroll { width: 16px; margin-top: 1px; background: #cdcdcd; flex: none; }
.vscroll-up { display: flex; align-items: center; justify-content: center; height: 17px; background: #f0f0f0; }
.vscroll-up svg { width: 8px; height: 5px; }

.content { flex: 1; min-width: 0; padding: 9px 8px 0 15px; margin-left: 2px; border-left: 1px solid #f2f2f2; }
.sec-head { display: flex; align-items: center; height: 20px; margin-left: -7px; }
.sec-head svg { width: 9px; height: 9px; color: #8a8a8a; }
.sec-head h2 { margin: 0 0 0 5px; font-size: 15px; font-weight: 400; line-height: 20px; color: #1e3287; white-space: nowrap; }
.sec-line { flex: 1; height: 1px; margin-left: 7px; background: #e2e2e2; }

.folders { display: grid; grid-template-columns: 250px 250px; column-gap: 4px; row-gap: 4px; margin: 6px 0 4px; grid-auto-rows: 52px; }
.tile { display: flex; align-items: flex-start; padding: 7px 0 0 12px; color: #222; white-space: nowrap; }
.tile span { margin: 2px 0 0 3px; }
.tile-hover { background: #e5f3ff; }
.folder-ico { width: 42px; height: 42px; }

.drives { display: grid; grid-template-columns: 250px 250px; column-gap: 4px; row-gap: 4px; margin-top: 8px; grid-auto-rows: 57px; }
.drive { position: relative; display: flex; border: 1px solid transparent; }
.drive-selected { background: #cce8ff; border-color: #99d1ff; }
.drive-ico { width: 55px; height: 55px; }
.drive-info { width: 189px; padding-top: 2px; }
.drive-name { height: 16px; color: #222; white-space: nowrap; padding-left: 1px; word-spacing: 1px; letter-spacing: .1px; }
.drive-name-dvd { margin-top: 7px; letter-spacing: .25px; }
.bar { height: 16px; margin-top: 1px; background: #e6e6e6; border: 1px solid #bcbcbc; }
.bar i { height: 14px; margin: 0 0 0 -1px; background: #26a0da; }
.drive-free { height: 16px; margin-top: 2px; padding-left: 1px; color: #6d6d6d; white-space: nowrap; letter-spacing: .25px; word-spacing: 1px; }
.dvd-badge { position: absolute; left: 22px; top: 24px; width: 27px; height: 13px; background: #111; color: #fff; font-size: 11px; line-height: 13px; text-align: center; border-radius: 1px; }

/* overlays */
.mark { position: absolute; border: 2px solid #e0141e; }
.mark-view { left: 121px; top: 29px; width: 52px; height: 27px; }
.mark-hidden { left: 650px; top: 115px; width: 101px; height: 20px; }
.note { position: absolute; color: #ed1c24; white-space: nowrap; }
.note-1 { left: 180px; top: 44px; font-size: 17px; line-height: 20px; font-family: "Liberation Sans", sans-serif; }
.note-2 { left: 759px; top: 125px; font-size: 17px; line-height: 20px; letter-spacing: 1px; word-spacing: 3px; font-family: "Liberation Sans", "Noto Sans CJK SC", sans-serif; }
.tooltip { position: absolute; left: 311px; top: 270px; width: 169px; height: 22px; padding-left: 5px; background: #fff; border: 1px solid #767676; color: #575757; line-height: 20px; white-space: nowrap; letter-spacing: .16px; }
.watermark { position: absolute; left: 719px; top: 574px; color: rgba(120, 120, 120, .22); font-size: 16px; line-height: 20px; letter-spacing: -.05px; font-family: "Liberation Sans", sans-serif; white-space: nowrap; }
```
